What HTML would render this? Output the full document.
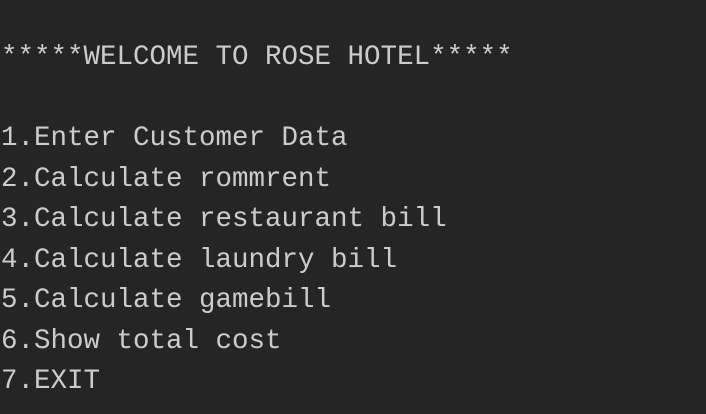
<!DOCTYPE html>
<html><head><style>
html,body{margin:0;padding:0;background:#252526;width:706px;height:414px;overflow:hidden}
pre{margin:0;position:absolute;left:1px;top:38px;font-family:"Liberation Mono",monospace;font-size:27.5px;line-height:40.5px;color:#cccccc}
</style></head><body>
<pre>*****WELCOME TO ROSE HOTEL*****

1.Enter Customer Data
2.Calculate rommrent
3.Calculate restaurant bill
4.Calculate laundry bill
5.Calculate gamebill
6.Show total cost
7.EXIT</pre>
</body></html>
